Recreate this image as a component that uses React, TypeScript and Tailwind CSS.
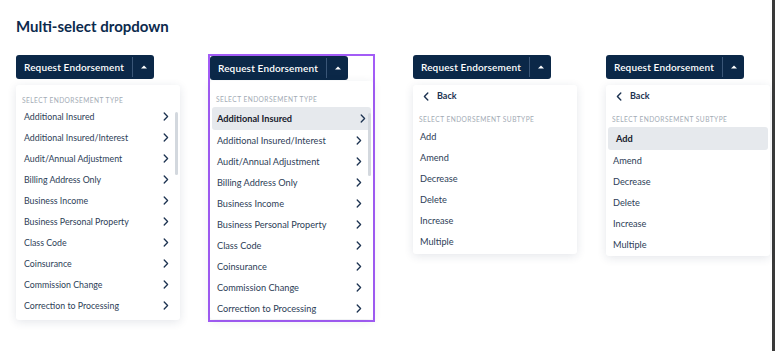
import React from 'react';

const types = [
  'Additional Insured',
  'Additional Insured/Interest',
  'Audit/Annual Adjustment',
  'Billing Address Only',
  'Business Income',
  'Business Personal Property',
  'Class Code',
  'Coinsurance',
  'Commission Change',
  'Correction to Processing',
];

const subtypes = ['Add', 'Amend', 'Decrease', 'Delete', 'Increase', 'Multiple'];

const ChevronRight = () => (
  <svg width="6" height="9" viewBox="0 0 6 9" fill="none">
    <path d="M1.2 1l3.4 3.5L1.2 8" stroke="#1d3351" strokeWidth="1.3" strokeLinecap="round" strokeLinejoin="round" />
  </svg>
);

const ChevronLeft = () => (
  <svg width="6" height="9" viewBox="0 0 6 9" fill="none">
    <path d="M4.8 1L1.4 4.5 4.8 8" stroke="#1d3351" strokeWidth="1.4" strokeLinecap="round" strokeLinejoin="round" />
  </svg>
);

const SplitButton = () => (
  <div className="flex h-[24px] w-[138px] rounded-[3px] bg-[#0b2848] text-white">
    <div className="flex w-[116px] items-center justify-center text-[10px] font-semibold tracking-[0.15px]">
      Request Endorsement
    </div>
    <div className="w-px bg-[#3a5677] my-[2px]" />
    <div className="flex flex-1 items-center justify-center">
      <svg width="6" height="4" viewBox="0 0 6 4">
        <path d="M0 3.5L3 0.5 6 3.5z" fill="#ffffff" />
      </svg>
    </div>
  </div>
);

const Header = ({ children }: { children: React.ReactNode }) => (
  <div className="h-[10px] text-[6.6px] leading-[10px] uppercase tracking-[0.45px] text-[#a3abb5]">{children}</div>
);

const Scrollbar = ({ top }: { top: string }) => (
  <div className={`absolute right-[2px] w-[3px] h-[63px] rounded-full bg-[#d3d8de] ${top}`} />
);

const TypeMenu = ({ selected }: { selected?: boolean }) => (
  <div className="relative">
    <div className="pl-[6px]">
      <Header>Select Endorsement Type</Header>
    </div>
    <div className={selected ? 'mt-[3px]' : 'mt-[1px]'}>
      {types.map((t, i) => {
        const active = selected && i === 0;
        return (
          <div
            key={t}
            className={
              active
                ? 'mx-[2px] flex h-[23px] items-center justify-between rounded-[3px] bg-[#e6e9ed] pl-[5px] pr-[5px] text-[9.2px] font-bold text-[#17202c]'
                : selected
                ? 'flex h-[21px] items-center justify-between pl-[7px] pr-[11px] text-[9.2px] text-[#2d4057]'
                : 'flex h-[21px] items-center justify-between pl-[8px] pr-[11px] text-[8.8px] text-[#2d4057]'
            }
          >
            <span>{t}</span>
            <ChevronRight />
          </div>
        );
      })}
    </div>
  </div>
);

const SubtypeMenu = ({ selected }: { selected?: boolean }) => (
  <div className="rounded-[3px] bg-white shadow-[0_2px_10px_rgba(30,50,80,0.12)]">
    <div className="flex h-[21px] items-center pl-[10px] pt-[1px] text-[9px] font-bold text-[#1d3351]">
      <ChevronLeft />
      <span className="ml-[8px]">Back</span>
    </div>
    <div className="mt-[8px] pl-[6px]">
      <Header>Select Endorsement Subtype</Header>
    </div>
    <div className={selected ? 'mt-[3px] pb-[1px]' : 'mt-[2px] pb-[2px]'}>
      {subtypes.map((s, i) => {
        const active = selected && i === 0;
        return (
          <div
            key={s}
            className={
              active
                ? 'mx-[2px] flex h-[23px] items-center rounded-[3px] bg-[#e6e9ed] pl-[8px] text-[9.2px] font-bold text-[#17202c]'
                : 'flex h-[21px] items-center pl-[7px] text-[9.2px] text-[#2d4057]'
            }
          >
            {s}
          </div>
        );
      })}
    </div>
  </div>
);

export default function App() {
  return (
    <div className="min-h-screen bg-white border-r-[3px] border-[#3a3a3a] font-['Lato','Open_Sans',sans-serif] pl-4 pt-[16px]">
      <h1 className="text-[15px] leading-[20px] font-bold text-[#0c2a4d]">Multi-select dropdown</h1>

      <div className="mt-[19px] flex items-start">
        {/* type list */}
        <div className="w-[164px]">
          <SplitButton />
          <div className="relative mt-[6px] rounded-[3px] bg-white pt-[10px] pb-[4px] shadow-[0_2px_10px_rgba(30,50,80,0.12)]">
            <TypeMenu />
            <Scrollbar top="top-[27px]" />
          </div>
        </div>

        {/* type list, hover state */}
        <div className="ml-[28px] -mt-[1px] h-[268px] w-[167px] border-2 border-[#a35cf6]">
          <SplitButton />
          <div className="relative mt-[1px] rounded-[3px] bg-white pt-[13px] shadow-[0_2px_10px_rgba(30,50,80,0.10)]">
            <TypeMenu selected />
            <Scrollbar top="top-[32px]" />
          </div>
        </div>

        {/* subtype list */}
        <div className="ml-[38px] w-[164px]">
          <SplitButton />
          <div className="mt-[6px]">
            <SubtypeMenu />
          </div>
        </div>

        {/* subtype list, hover state */}
        <div className="ml-[29px] w-[164px]">
          <SplitButton />
          <div className="mt-[6px]">
            <SubtypeMenu selected />
          </div>
        </div>
      </div>
    </div>
  );
}
